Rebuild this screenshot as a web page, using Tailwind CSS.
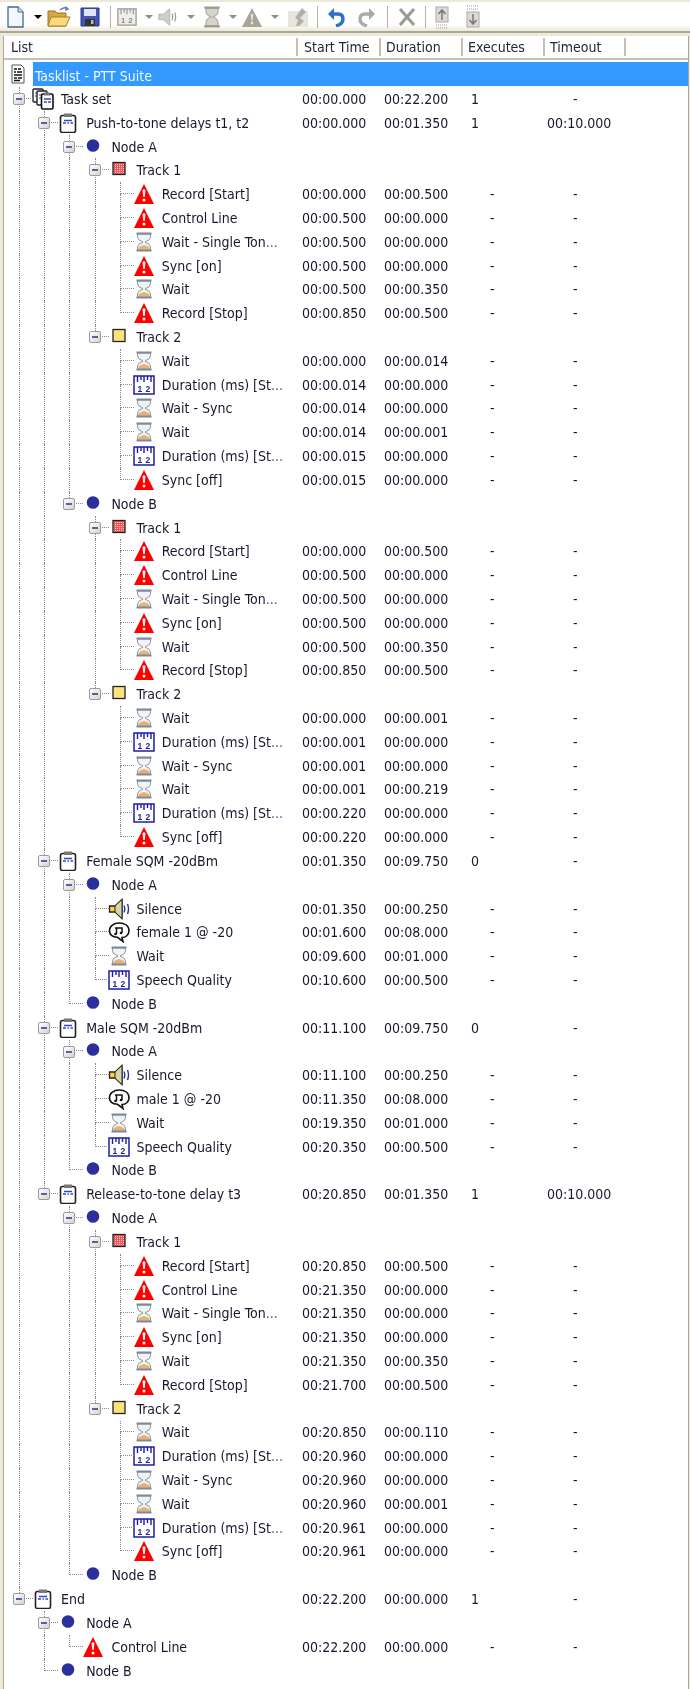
<!DOCTYPE html>
<html lang="en">
<head>
    <meta charset="UTF-8">
    <title>Tasklist - PTT Suite</title>
    <script src="https://cdn.jsdelivr.net/npm/@tailwindcss/browser@4"></script>
</head>
<body class="bg-white">
    <!-- icon sheet -->
    <svg class="absolute w-0 h-0">
        <defs>
            <pattern id="redcheck" width="2" height="2" patternUnits="userSpaceOnUse">
                <rect width="2" height="2" fill="#ee5a5a"/>
                <rect width="1" height="1" fill="#f9c0c0"/>
            </pattern>
        </defs>
        <symbol id="warn" viewBox="0 0 20 20">
            <path d="M10 0 L20 20 H0 Z" fill="#f00"/>
            <path d="M8.6 6.5 Q10 4.2 11.4 6.5 L10.7 13 H9.3 Z" fill="#fff"/>
            <circle cx="10" cy="16" r="1.5" fill="#fff"/>
        </symbol>
        <symbol id="wait" viewBox="0 0 20 20">
            <path d="M3.5 2 H16.5 V5 Q16.5 8 11 10 Q16.5 12 16.5 15 V18 H3.5 V15 Q3.5 12 9 10 Q3.5 8 3.5 5 Z" fill="#f2f3f4" stroke="#8f98a6"/>
            <path d="M4.5 17.5 V15.5 Q7 13.5 10 13 Q13 13.5 15.5 15.5 V17.5 Z" fill="#ebb06a"/>
            <rect x="2.5" y="0.5" width="15" height="2" fill="#7d8899"/>
            <rect x="2.5" y="17.5" width="15" height="2" fill="#7d8899"/>
        </symbol>
        <symbol id="ruler" viewBox="0 0 22 20">
            <path d="M1 1 H21 V19 H1 Z" fill="#fff" stroke="#1c1ca8" stroke-width="1.5"/>
            <path d="M4.5 1 V7 M8 1 V5 M11 1 V7 M14.5 1 V5 M18 1 V7" stroke="#1c1ca8" stroke-width="1.4"/>
            <text x="4.5" y="16.5" font-size="8.5" font-weight="700" font-family="Liberation Sans, sans-serif" fill="#1c1ca8">1</text>
            <text x="12.5" y="16.5" font-size="8.5" font-weight="700" font-family="Liberation Sans, sans-serif" fill="#1c1ca8">2</text>
        </symbol>
        <symbol id="clip" viewBox="0 0 20 20">
            <rect x="2.5" y="2.5" width="15" height="17" rx="2" fill="#fff" stroke="#222" stroke-width="1.6"/>
            <rect x="6" y="0.5" width="8" height="3.5" fill="#777"/>
            <path d="M6 7.5 H14 M5 10 H8 M9.5 10 H11 M12.5 10 H15" stroke="#3344cc" stroke-width="1.4"/>
        </symbol>
        <symbol id="stack" viewBox="0 0 22 22">
            <rect x="1" y="1" width="10" height="13" rx="1" fill="#fff" stroke="#222" stroke-width="1.4"/>
            <path d="M3 5 H9 M3 8 H9" stroke="#3344cc"/>
            <rect x="5" y="3" width="10" height="14" rx="1" fill="#fff" stroke="#222" stroke-width="1.4"/>
            <path d="M7 7 H13 M7 10 H13" stroke="#3344cc"/>
            <rect x="9.5" y="6" width="11.5" height="15" rx="1.5" fill="#fff" stroke="#111" stroke-width="1.6"/>
            <rect x="12" y="4.5" width="6" height="3" fill="#777"/>
            <path d="M12 11 H19 M12 14 H15 M16 14 H19" stroke="#3344cc" stroke-width="1.3"/>
        </symbol>
        <symbol id="doc" viewBox="0 0 20 20">
            <path d="M4 1 H13 L16 4 V19 H4 Z" fill="#fff" stroke="#555"/>
            <path d="M6 5 H9 M10 5 H13 M6 8 H8 M9 8 H14 M6 11 H14 M6 14 H9 M10 14 H14 M6 16.5 H12" stroke="#111" stroke-width="1.5"/>
        </symbol>
        <symbol id="speaker" viewBox="0 0 22 22">
            <path d="M1.5 8 H7 L14 1.5 V20.5 L7 14 H1.5 Z" fill="#f5d442" stroke="#222" stroke-width="1.3"/>
            <path d="M14 1.5 V20.5 L7 14 V8 Z" fill="#d9d6a8" stroke="#222" stroke-width="1"/>
            <path d="M16 7.5 Q17.5 11 16 14.5 M19.5 6 Q21.5 11 19.5 16" fill="none" stroke="#2233aa" stroke-width="1.4"/>
        </symbol>
        <symbol id="music" viewBox="0 0 22 22">
            <path d="M11 2 C17 2 21 5 21 10 C21 14 17.5 16.5 14 16.5 L15 20.5 L9.5 16.3 C5 16 1.5 14 1.5 9.5 C1.5 5 6 2 11 2 Z" fill="#fff" stroke="#111" stroke-width="1.6"/>
            <path d="M7 7 H14 V12 M8.5 7 V13" fill="none" stroke="#111" stroke-width="1.5"/>
            <circle cx="7.5" cy="13" r="1.3" fill="#111"/>
            <circle cx="13" cy="12" r="1.3" fill="#111"/>
        </symbol>
        <symbol id="node" viewBox="0 0 20 20">
            <circle cx="10" cy="8.5" r="6.3" fill="#2b2f9c"/>
        </symbol>
        <symbol id="track1" viewBox="0 0 20 20">
            <rect x="4" y="2.5" width="12" height="12" fill="url(#redcheck)" stroke="#222" stroke-width="1.3"/>
        </symbol>
        <symbol id="track2" viewBox="0 0 20 20">
            <rect x="4" y="2.5" width="12" height="12" fill="#fbe27c" stroke="#222" stroke-width="1.3"/>
        </symbol>
        <symbol id="arrow" viewBox="0 0 8 4"><path d="M0 0 H8 L4 4 Z"/></symbol>
    </svg>

    <div class="w-[690px] h-[1689px] overflow-hidden relative bg-[#ece9d8] blur-[0.35px] font-['DejaVu_Sans_Condensed','Liberation_Sans',sans-serif] text-[14px] text-[#15192c]">
        <!-- toolbar -->
        <div class="h-[33px] pt-[2px] border-b-2 border-[#aca899]">
            <div class="h-[29px] bg-gradient-to-b from-white from-[78%] to-[#ece9d8] flex items-center text-[#8f8f8f]">
                <svg class="ml-[5px] w-[20px] h-[24px]" viewBox="0 0 20 24"><path d="M3 2 H13 L18 7 V22 H3 Z" fill="#f4f8fc" stroke="#46688e" stroke-width="1.3"/><path d="M13 2 V7 H18" fill="#cfe0ee" stroke="#46688e"/></svg>
                <svg class="ml-[9px] w-[8px] h-[4px] text-black" fill="currentColor"><use href="#arrow"/></svg>
                <svg class="ml-[5px] w-[24px] h-[24px]" viewBox="0 0 24 24"><path d="M1 6 H8 L10 8 H19 V21 H1 Z" fill="#d9a441" stroke="#9a7428"/><path d="M4 12 H23 L19 21 H1 Z" fill="#fbd978" stroke="#a5802f"/><path d="M13 5 Q17 1 21 4" fill="none" stroke="#5a7fa8" stroke-width="1.6"/><path d="M19 1 L22 4.5 L18 6 Z" fill="#5a7fa8"/></svg>
                <svg class="ml-[9px] w-[20px] h-[22px]" viewBox="0 0 20 20"><path d="M1 1 H19 V19 H1 Z" fill="#4452b8" stroke="#2a3488"/><rect x="4" y="2" width="12" height="7" fill="#dfe4f4"/><rect x="5" y="12" width="10" height="7" fill="#333"/><rect x="11" y="13" width="2.5" height="4" fill="#bbb"/></svg>
                <div class="ml-[10px] w-[1px] h-[22px] bg-[#b5b2a5]"></div>
                <svg class="ml-[6px] w-[20px] h-[22px]" viewBox="0 0 22 20"><path d="M1 1 H21 V19 H1 Z" fill="#eeeeea" stroke="#9a9a92" stroke-width="1.4"/><path d="M4.5 1 V7 M8 1 V5 M11 1 V7 M14.5 1 V5 M18 1 V7" stroke="#9a9a92" stroke-width="1.3"/><text x="4.5" y="16.5" font-size="8.5" font-weight="700" font-family="Liberation Sans, sans-serif" fill="#8a8a82">1</text><text x="12.5" y="16.5" font-size="8.5" font-weight="700" font-family="Liberation Sans, sans-serif" fill="#8a8a82">2</text></svg>
                <svg class="ml-[8px] w-[8px] h-[4px]" fill="currentColor"><use href="#arrow"/></svg>
                <svg class="ml-[4px] w-[20px] h-[22px]" viewBox="0 0 22 22"><path d="M2 8 H7 L14 2 V20 L7 14 H2 Z" fill="#cfcfc9" stroke="#b0b0a8"/><path d="M16.5 7.5 Q18 11 16.5 14.5 M19.5 6 Q21.5 11 19.5 16" fill="none" stroke="#999" stroke-width="1.3"/></svg>
                <svg class="ml-[10px] w-[8px] h-[4px]" fill="currentColor"><use href="#arrow"/></svg>
                <svg class="ml-[9px] w-[16px] h-[22px]" viewBox="3 0 14 20"><path d="M4.5 2 H15.5 V5 Q15.5 8 11 10 Q15.5 12 15.5 15 V18 H4.5 V15 Q4.5 12 9 10 Q4.5 8 4.5 5 Z" fill="#d4d4cc" stroke="#a8a89e"/><rect x="3" y="0.5" width="14" height="2" fill="#9a9a90"/><rect x="3" y="17.5" width="14" height="2" fill="#9a9a90"/></svg>
                <svg class="ml-[9px] w-[8px] h-[4px]" fill="currentColor"><use href="#arrow"/></svg>
                <svg class="ml-[5px] w-[20px] h-[22px]" viewBox="0 0 20 20"><path d="M10 1 L20 20 H0 Z" fill="#a5a59b"/><path d="M8.8 7 H11.2 L10.7 13.5 H9.3 Z" fill="#e4e4dc"/><circle cx="10" cy="16" r="1.4" fill="#e4e4dc"/></svg>
                <svg class="ml-[9px] w-[8px] h-[4px]" fill="currentColor"><use href="#arrow"/></svg>
                <svg class="ml-[8px] w-[22px] h-[22px]" viewBox="0 0 22 22"><path d="M1 5 H21 V21 H1 Z" fill="#e6e6e0"/><path d="M15 2 L19 6 L13 12 L17 15 L12 20 H9 L11 14 L8 12 Z" fill="#b0b0a6"/></svg>
                <div class="ml-[8px] w-[1px] h-[22px] bg-[#b5b2a5]"></div>
                <svg class="ml-[9px] w-[18px] h-[20px]" viewBox="0 0 18 20"><path d="M5 7 H11 Q16 7 16 12 Q16 17 9 19" fill="none" stroke="#2b70c9" stroke-width="3.4"/><path d="M7 1 V13 L1 7 Z" fill="#2b70c9"/></svg>
                <svg class="ml-[13px] w-[18px] h-[20px]" viewBox="0 0 18 20"><path d="M13 7 H7 Q2 7 2 12 Q2 17 9 19" fill="none" stroke="#a9aca6" stroke-width="3.4"/><path d="M11 1 V13 L17 7 Z" fill="#a9aca6"/></svg>
                <div class="ml-[11px] w-[1px] h-[22px] bg-[#b5b2a5]"></div>
                <svg class="ml-[10px] w-[18px] h-[20px]" viewBox="0 0 18 20"><path d="M2 2 L16 18 M16 2 L2 18" stroke="#9a9a94" stroke-width="3"/></svg>
                <div class="ml-[9px] w-[1px] h-[22px] bg-[#b5b2a5]"></div>
                <svg class="ml-[9px] w-[14px] h-[24px]" viewBox="0 0 14 24"><rect x="1" y="2" width="12" height="15" fill="#dcdcd4" stroke="#aaa"/><path d="M7 15 V6 M3.5 9 L7 5 L10.5 9" fill="none" stroke="#777" stroke-width="1.5"/><path d="M1 20 H13 M1 23 H13" stroke="#999" stroke-dasharray="1 1"/></svg>
                <svg class="ml-[17px] w-[14px] h-[24px]" viewBox="0 0 14 24"><path d="M1 1 H13 M1 4 H13" stroke="#999" stroke-dasharray="1 1"/><rect x="1" y="7" width="12" height="15" fill="#dcdcd4" stroke="#aaa"/><path d="M7 9 V18 M3.5 15 L7 19 L10.5 15" fill="none" stroke="#777" stroke-width="1.5"/></svg>
            </div>
        </div>

        <!-- list panel -->
        <div class="mt-[3px] ml-[3px] mr-[1px] h-[1653px] bg-white border-l border-r border-[#aca899]">
            <div class="h-[24px] flex items-center border-b-2 border-[#c4c1b4] text-[#23263a]">
                <div class="w-[294px] h-[18px] leading-[18px] pl-[7px] border-r-2 border-[#c4c1b4]">List</div>
                <div class="w-[83px] h-[18px] leading-[18px] pl-[6px] border-r-2 border-[#c4c1b4]">Start Time</div>
                <div class="w-[82px] h-[18px] leading-[18px] pl-[5px] border-r-2 border-[#c4c1b4]">Duration</div>
                <div class="w-[82px] h-[18px] leading-[18px] pl-[5px] border-r-2 border-[#c4c1b4]">Executes</div>
                <div class="w-[81px] h-[18px] leading-[18px] pl-[5px] border-r-2 border-[#c4c1b4]">Timeout</div>
            </div>
            <div id="rows" class="pt-[1px]"></div>
        </div>
    </div>

<script>
    // [depth, icon, label, start, duration, executes, timeout]
    const leaf = (icon, label, start, dur) => [null, icon, label, start, dur, '-', '-'];
    function leaves(d, list) {
        return list.map(r => { r[0] = d; return r; });
    }
    function track1(a, b, c) {
        return leaves(5, [
            leaf('warn', 'Record [Start]', a, '00:00.500'),
            leaf('warn', 'Control Line', b, '00:00.000'),
            leaf('wait', 'Wait - Single Ton...', b, '00:00.000'),
            leaf('warn', 'Sync [on]', b, '00:00.000'),
            leaf('wait', 'Wait', b, '00:00.350'),
            leaf('warn', 'Record [Stop]', c, '00:00.500')
        ]);
    }
    function track2(t) {
        return leaves(5, [
            leaf('wait', 'Wait', t[0], t[1]),
            leaf('ruler', 'Duration (ms) [St...', t[2], '00:00.000'),
            leaf('wait', 'Wait - Sync', t[2], '00:00.000'),
            leaf('wait', 'Wait', t[2], t[3]),
            leaf('ruler', 'Duration (ms) [St...', t[4], '00:00.000'),
            leaf('warn', 'Sync [off]', t[4], '00:00.000')
        ]);
    }
    function sqm(tone, t) {
        return leaves(4, [
            leaf('speaker', 'Silence', t[0], '00:00.250'),
            leaf('music', tone, t[1], '00:08.000'),
            leaf('wait', 'Wait', t[2], '00:01.000'),
            leaf('ruler', 'Speech Quality', t[3], '00:00.500')
        ]);
    }
    const nodeA = [3, 'node', 'Node A'], nodeB = [3, 'node', 'Node B'];
    const t1 = [4, 'track1', 'Track 1'], t2 = [4, 'track2', 'Track 2'];
    const data = [
        [1, 'stack', 'Task set', '00:00.000', '00:22.200', '1', '-'],
        [2, 'clip', 'Push-to-tone delays t1, t2', '00:00.000', '00:01.350', '1', '00:10.000'],
        nodeA, t1, ...track1('00:00.000', '00:00.500', '00:00.850'),
        t2, ...track2(['00:00.000', '00:00.014', '00:00.014', '00:00.001', '00:00.015']),
        nodeB, t1, ...track1('00:00.000', '00:00.500', '00:00.850'),
        t2, ...track2(['00:00.000', '00:00.001', '00:00.001', '00:00.219', '00:00.220']),
        [2, 'clip', 'Female SQM -20dBm', '00:01.350', '00:09.750', '0', '-'],
        nodeA, ...sqm('female 1 @ -20', ['00:01.350', '00:01.600', '00:09.600', '00:10.600']), nodeB,
        [2, 'clip', 'Male SQM -20dBm', '00:11.100', '00:09.750', '0', '-'],
        nodeA, ...sqm('male 1 @ -20', ['00:11.100', '00:11.350', '00:19.350', '00:20.350']), nodeB,
        [2, 'clip', 'Release-to-tone delay t3', '00:20.850', '00:01.350', '1', '00:10.000'],
        nodeA, t1, ...track1('00:20.850', '00:21.350', '00:21.700'),
        t2, ...track2(['00:20.850', '00:00.110', '00:20.960', '00:00.001', '00:20.961']),
        nodeB,
        [1, 'clip', 'End', '00:22.200', '00:00.000', '1', '-'],
        [2, 'node', 'Node A'],
        [3, 'warn', 'Control Line', '00:22.200', '00:00.000', '-', '-'],
        [2, 'node', 'Node B']
    ];

    const rowCls = 'h-[23.82px] flex items-center';
    let html = '<div class="h-[26px] flex items-center pl-[4px]">'
        + '<svg class="w-[20px] h-[20px]"><use href="#doc"/></svg>'
        + '<div class="ml-[5px] flex-1 h-[24px] leading-[28px] pl-[2px] bg-[#3399ff] text-[#f2f8ff]">Tasklist - PTT Suite</div></div>';

    // true when a later row is still a sibling at this depth
    function continues(i, depth) {
        for (let j = i + 1; j < data.length; j++) {
            if (data[j][0] < depth) return false;
            if (data[j][0] === depth) return true;
        }
        return false;
    }

    data.forEach((r, i) => {
        const d = r[0];
        const hasKids = data[i + 1] && data[i + 1][0] > d;
        let gutter = '';
        for (let l = 1; l < d; l++) {
            gutter += continues(i, l)
                ? '<div class="w-[25.2px] h-full shrink-0 border-l border-dotted border-[#8a8a8a]"></div>'
                : '<div class="w-[25.2px] h-full shrink-0"></div>';
        }
        const box = hasKids
            ? '<div class="absolute left-[-6px] top-[6px] w-[12px] h-[12px] rounded-[2px] border border-[#9b9b9b] bg-gradient-to-br from-white to-[#d6d3cc] flex items-center justify-center"><div class="w-[6px] h-[2px] bg-[#4f63a8]"></div></div>'
            : '';
        const lower = continues(i, d) ? '<div class="h-1/2 border-l border-dotted border-[#8a8a8a]"></div>' : '';
        gutter += '<div class="relative w-[14px] h-full shrink-0"><div class="h-1/2 border-l border-b border-dotted border-[#8a8a8a]"></div>' + lower + box + '</div>';

        const wide = r[1] === 'ruler' || r[1] === 'speaker' || r[1] === 'music' || r[1] === 'stack';
        const icon = wide
            ? '<svg class="w-[22px] h-[22px] -mx-[1px] shrink-0"><use href="#' + r[1] + '"/></svg>'
            : '<svg class="w-[20px] h-[20px] shrink-0"><use href="#' + r[1] + '"/></svg>';

        let label = r[2];
        if (label.endsWith('...')) {
            label = label.slice(0, -3) + '<span class="text-[#7a3f8e]">...</span>';
        }

        const exec = r[5] === undefined ? '' : (r[5] === '-' ? '<span class="pl-[19px]">-</span>' : r[5]);
        const tout = r[6] === undefined ? '' : (r[6] === '-' ? '<span class="pl-[26px]">-</span>' : r[6]);

        html += '<div class="' + rowCls + '">'
            + '<div class="w-[298px] h-full pl-[15px] flex items-center shrink-0 whitespace-nowrap">' + gutter + icon
            + '<span class="ml-[8px] pt-[1px]">' + label + '</span></div>'
            + '<div class="w-[82px] shrink-0 pt-[1px]">' + (r[3] || '') + '</div>'
            + '<div class="w-[87px] shrink-0 pt-[1px]">' + (r[4] || '') + '</div>'
            + '<div class="w-[76px] shrink-0 pt-[1px]">' + exec + '</div>'
            + '<div class="pt-[1px]">' + tout + '</div>'
            + '</div>';
    });
    document.getElementById('rows').innerHTML = html;
</script>
</body>
</html>
